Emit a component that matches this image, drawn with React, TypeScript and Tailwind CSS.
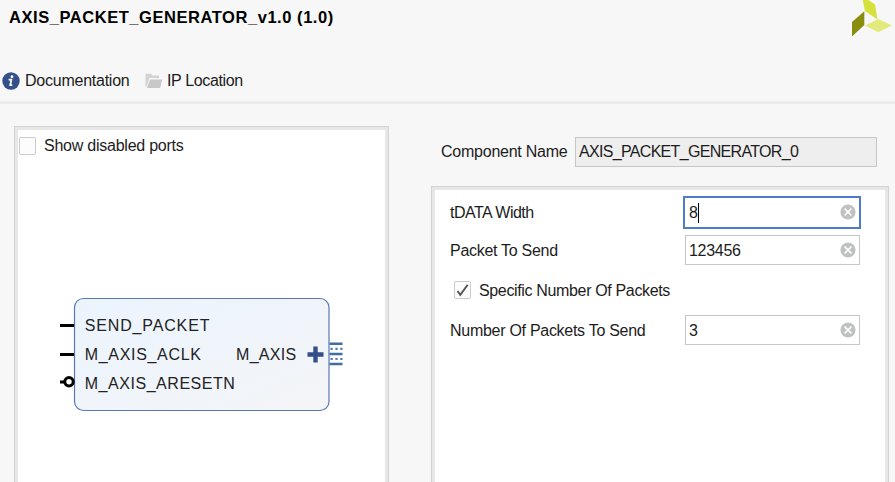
import React from "react";

function XilinxLogo() {
  return (
    <svg width="43" height="38" viewBox="0 0 43 38" className="block">
      <path d="M10.5 -1H15L23 4.5L25.5 19.5L13 11Z" fill="#d6e23c" />
      <path d="M0 22L12.3 11.3V25L0 36.5Z" fill="#898c0c" />
      <path d="M13 25.5L26.3 19L40 25.5L26.3 32.3Z" fill="#e3ea7c" />
    </svg>
  );
}

function InfoIcon() {
  return (
    <svg width="18" height="18" viewBox="0 0 18 18" className="block">
      <circle cx="9" cy="9" r="8.7" fill="#34508a" />
      <circle cx="10" cy="4.7" r="1.4" fill="#fff" />
      <path d="M6.6 7.6H9.4L8.2 13.2H10.3" fill="none" stroke="#fff" strokeWidth="1.7" />
    </svg>
  );
}

function FolderIcon() {
  return (
    <svg width="18" height="16" viewBox="0 0 18 16" className="block">
      <path d="M0.5 14V1.5Q0.5 0.7 1.3 0.7H6L7.3 2.5H14V5H4.5L1.6 13.5Z" fill="#d3d3d3" />
      <path d="M5 6.5H17.2L15.4 14.2Q15.2 15 14.4 15H2Z" fill="#c8c8c8" />
    </svg>
  );
}

function ClearIcon() {
  return (
    <svg width="16" height="16" viewBox="0 0 16 16" className="block">
      <circle cx="8" cy="8" r="7.6" fill="#bfc1c2" />
      <path d="M4.6 4.6L11.4 11.4M11.4 4.6L4.6 11.4" stroke="#fff" strokeWidth="1.5" />
    </svg>
  );
}

function Field({ value, focused = false }: { value: string; focused?: boolean }) {
  return (
    <div
      className={
        focused
          ? "-ml-[2px] flex h-[33px] w-[178px] items-center justify-between border-2 border-[#4f7bcb] bg-white pr-[3px] pl-[4px]"
          : "flex h-[30px] w-[175px] items-center justify-between border border-[#c6c6c6] bg-white pr-[3px] pl-[3px]"
      }
    >
      <span className="flex items-center pt-px tracking-[-0.3px]">
        {value}
        {focused && <span className="h-[20px] w-px bg-black" />}
      </span>
      <ClearIcon />
    </div>
  );
}

function BlockDiagram() {
  return (
    <svg width="290" height="118" viewBox="56 295 290 118" className="block" fontFamily="'Liberation Sans', Arial, sans-serif" fontSize="16" fill="#222">
      <defs>
        <linearGradient id="block" x1="0" y1="0" x2="1" y2="1">
          <stop offset="0" stopColor="#ebf4fe" />
          <stop offset="1" stopColor="#f4f5f7" />
        </linearGradient>
      </defs>
      <rect x="74.5" y="298.5" width="254.5" height="112" rx="9" fill="url(#block)" stroke="#5878b5" strokeWidth="1.2" />
      <path d="M60 325.5H74M60 354.5H74M60 382H65" stroke="#000" strokeWidth="3" />
      <circle cx="69" cy="381.7" r="4.2" fill="#fff" stroke="#000" strokeWidth="3" />
      <text x="84.7" y="331" textLength="124.5">SEND_PACKET</text>
      <text x="84.7" y="360" textLength="116">M_AXIS_ACLK</text>
      <text x="84.7" y="389" textLength="150">M_AXIS_ARESETN</text>
      <text x="236" y="360" textLength="60">M_AXIS</text>
      <path d="M307.5 354.5H323.5M315.5 346.5V362.5" stroke="#34508a" strokeWidth="4.4" />
      <path d="M329.5 343.8H342.5M329.5 354H342.5M329.5 364H342.5" stroke="#3f6ea3" strokeWidth="2.4" />
      <path d="M330.5 348.8H342.5M330.5 359H342.5" stroke="#4d7bad" strokeWidth="2.2" strokeDasharray="2.2 2.7" />
    </svg>
  );
}

export default function App() {
  return (
    <div className="flex h-[482px] w-[895px] flex-col overflow-hidden bg-[#f7f7f7] font-['Liberation_Sans',Arial,sans-serif] text-[16px] leading-[20px] tracking-[-0.24px] whitespace-nowrap text-[#1c1c1c]">
      <header className="h-[104px] border-b-[3px] border-[#ebebeb]">
        <div className="flex h-[71px] items-start justify-between pl-[9px]">
          <h1 className="pt-[7px] text-[16.5px] leading-[20px] font-bold tracking-[0.55px] text-black">AXIS_PACKET_GENERATOR_v1.0 (1.0)</h1>
          <XilinxLogo />
        </div>
        <nav className="flex h-[20px] items-center pl-[2px]">
          <InfoIcon />
          <span className="ml-[5px] w-[105px]">Documentation</span>
          <span className="ml-[15px]"><FolderIcon /></span>
          <span className="ml-[4px] tracking-[-0.35px]">IP Location</span>
        </nav>
      </header>
      <main className="flex min-h-0 flex-1 pl-[14px]">
        <section className="mt-[22px] w-[375px] shrink-0 border border-b-0 border-[#d3d3d3]">
          <div className="h-full border-[3px] border-b-0 border-[#e7e7e7] bg-white">
            <label className="flex h-[32px] items-center pl-px">
              <span className="h-[18px] w-[17px] rounded-[2px] border border-[#cbcbcb] bg-[#fcfcfc]" />
              <span className="ml-[8px]">Show disabled ports</span>
            </label>
            <div className="pt-[133px] pl-[38px]">
              <BlockDiagram />
            </div>
          </div>
        </section>
        <section className="ml-[42px] flex w-[458px] flex-col">
          <div className="mt-[32px] flex h-[31px] items-center pl-[10px]">
            <span className="w-[134px] shrink-0">Component Name</span>
            <div className="flex h-[30px] w-[302px] items-center border border-[#c6c6c6] bg-[#eeeeee] pl-[3px] tracking-[-0.68px]">AXIS_PACKET_GENERATOR_0</div>
          </div>
          <div className="mt-[19px] flex-1 border border-b-0 border-[#d3d3d3]">
            <div className="h-full border-[3px] border-b-0 border-[#e7e7e7] bg-white pt-[4px] pl-[15px]">
              <div className="flex h-[36px] items-center">
                <span className="w-[235px] shrink-0 pt-px tracking-[-0.5px]">tDATA Width</span>
                <Field value="8" focused />
              </div>
              <div className="mt-[2px] flex h-[36px] items-center">
                <span className="w-[235px] shrink-0 pt-px tracking-[-0.28px]">Packet To Send</span>
                <Field value="123456" />
              </div>
              <label className="mt-[4px] flex h-[36px] items-center pl-[4px]">
                <span className="flex h-[18px] w-[17px] items-center justify-center rounded-[2px] border border-[#cbcbcb] bg-[#fcfcfc]">
                  <svg width="13" height="14" viewBox="0 0 13 14">
                    <path d="M1.5 8L4.3 11.8L11.7 1.8" fill="none" stroke="#555" strokeWidth="1.9" />
                  </svg>
                </span>
                <span className="ml-[8px] pt-px tracking-[-0.35px]">Specific Number Of Packets</span>
              </label>
              <div className="mt-[4px] flex h-[36px] items-center">
                <span className="w-[235px] shrink-0 pt-px tracking-[-0.28px]">Number Of Packets To Send</span>
                <Field value="3" />
              </div>
            </div>
          </div>
        </section>
      </main>
    </div>
  );
}
